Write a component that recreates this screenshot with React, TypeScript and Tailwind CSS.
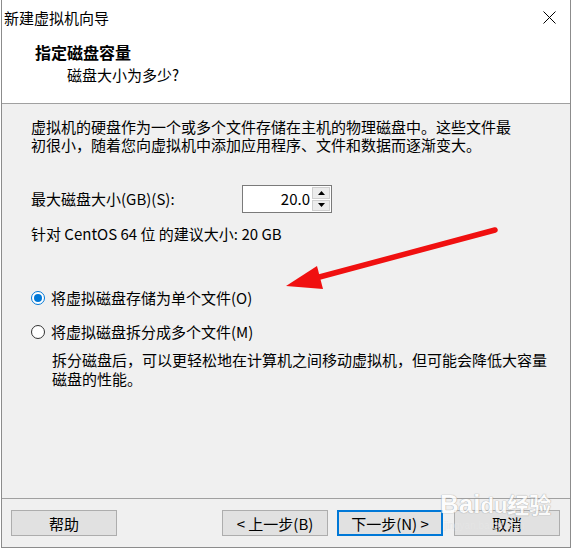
import React from 'react'

function Radio({ checked }: { checked?: boolean }) {
  return checked ? (
    <span className="w-[14px] h-[14px] rounded-full border border-[#0078d7] bg-white flex items-center justify-center shrink-0">
      <span className="w-[8px] h-[8px] rounded-full bg-[#0078d7]" />
    </span>
  ) : (
    <span className="w-[14px] h-[14px] rounded-full border border-[#333] bg-white shrink-0" />
  )
}

function Button({ label, primary, className }: { label: string; primary?: boolean; className?: string }) {
  return (
    <div
      className={
        'w-[106px] h-[26px] flex items-center justify-center text-[15px] leading-none bg-[#e1e1e1] ' +
        (primary ? 'border-2 border-[#0078d7] ' : 'border border-[#adadad] ') +
        (className ?? '')
      }
    >
      {label}
    </div>
  )
}

export default function App() {
  return (
    <div className="relative w-[575px] h-[549px] bg-white text-black font-['Noto_Sans_CJK_SC','Microsoft_YaHei',sans-serif] overflow-hidden">
      <div className="ml-[1px] w-[570px] h-[548px] border-x border-b border-[#8c8c8c] flex flex-col">
        {/* header */}
        <div className="h-[104px] bg-white border-b border-[#a0a0a0] shrink-0">
          <div className="h-[35px] flex items-center justify-between pl-[2px] pr-[14px]">
            <span className="text-[15px] leading-[20px]">新建虚拟机向导</span>
            <svg width="13" height="13" viewBox="0 0 13 13">
              <path d="M0.5 0.5 L12.5 12.5 M12.5 0.5 L0.5 12.5" stroke="#000" strokeWidth="1" />
            </svg>
          </div>
          <div className="mt-[7px] pl-[33px] text-[16px] leading-[20px] font-bold">指定磁盘容量</div>
          <div className="mt-[3px] pl-[65px] text-[15px] leading-[20px]">磁盘大小为多少?</div>
        </div>

        {/* body */}
        <div className="flex-1 bg-[#f0f0f0] pl-[29px] pt-[14px] text-[15px]">
          <p className="leading-[18px] whitespace-nowrap">
            虚拟机的硬盘作为一个或多个文件存储在主机的物理磁盘中。这些文件最
            <br />
            初很小，随着您向虚拟机中添加应用程序、文件和数据而逐渐变大。
          </p>

          <div className="mt-[31px] flex items-center">
            <span className="w-[211px] leading-[18px]">最大磁盘大小(GB)(S):</span>
            <div className="w-[90px] h-[28px] border border-[#7a7a7a] bg-white flex items-center">
              <span className="flex-1 text-right pr-[2px] leading-[18px]">20.0</span>
              <div className="w-[18px] h-[24px] mr-[1px] flex flex-col gap-[1px]">
                <div className="flex-1 bg-[#ececec] border border-[#cfcfcf] flex items-center justify-center">
                  <svg width="7" height="4" viewBox="0 0 7 4">
                    <path d="M0 4 L3.5 0 L7 4 Z" fill="#000" />
                  </svg>
                </div>
                <div className="flex-1 bg-[#ececec] border border-[#cfcfcf] flex items-center justify-center">
                  <svg width="7" height="4" viewBox="0 0 7 4">
                    <path d="M0 0 L7 0 L3.5 4 Z" fill="#000" />
                  </svg>
                </div>
              </div>
            </div>
          </div>

          <p className="mt-[12px] leading-[18px]">针对 CentOS 64 位 的建议大小: 20 GB</p>

          <div className="mt-[45px] flex items-center gap-[6px] h-[20px]">
            <Radio checked />
            <span className="leading-[20px]">将虚拟磁盘存储为单个文件(O)</span>
          </div>
          <div className="mt-[14px] flex items-center gap-[6px] h-[20px]">
            <Radio />
            <span className="leading-[20px]">将虚拟磁盘拆分成多个文件(M)</span>
          </div>
          <p className="mt-[8px] ml-[21px] leading-[19px] whitespace-nowrap">
            拆分磁盘后，可以更轻松地在计算机之间移动虚拟机，但可能会降低大容量
            <br />
            磁盘的性能。
          </p>
        </div>

        {/* footer */}
        <div className="h-[49px] shrink-0 bg-[#f0f0f0] border-t border-[#a0a0a0] pt-[11px] flex items-start">
          <Button label="帮助" className="ml-[9px]" />
          <Button label="< 上一步(B)" className="ml-[105px]" />
          <Button label="下一步(N) >" primary className="ml-[9px]" />
          <Button label="取消" className="ml-[11px]" />
        </div>
      </div>

      {/* red annotation arrow */}
      <svg className="absolute left-0 top-0 pointer-events-none" width="575" height="549" viewBox="0 0 575 549">
        <path d="M495 230 L312 279" stroke="#f01010" strokeWidth="5.5" strokeLinecap="round" />
        <path d="M286 286 L317 266 L323 289 Z" fill="#f01010" />
      </svg>

      {/* watermark */}
      <div className="absolute left-[440px] top-[488px] pointer-events-none opacity-80">
        <div className="text-[26px] leading-[30px] font-bold text-white font-['Liberation_Sans',sans-serif] [text-shadow:0_0_1px_#9a9a9a,0_0_1px_#9a9a9a]">
          Bai<span className="text-[22px]">du</span><span className="font-['Noto_Sans_CJK_SC',sans-serif] text-[22px]">经验</span>
        </div>
        <div className="text-[10px] leading-[12px] text-[#e6e6e6] -mt-[1px] ml-[4px] font-['Liberation_Sans',sans-serif]">jingyan.baidu.com</div>
      </div>
    </div>
  )
}
